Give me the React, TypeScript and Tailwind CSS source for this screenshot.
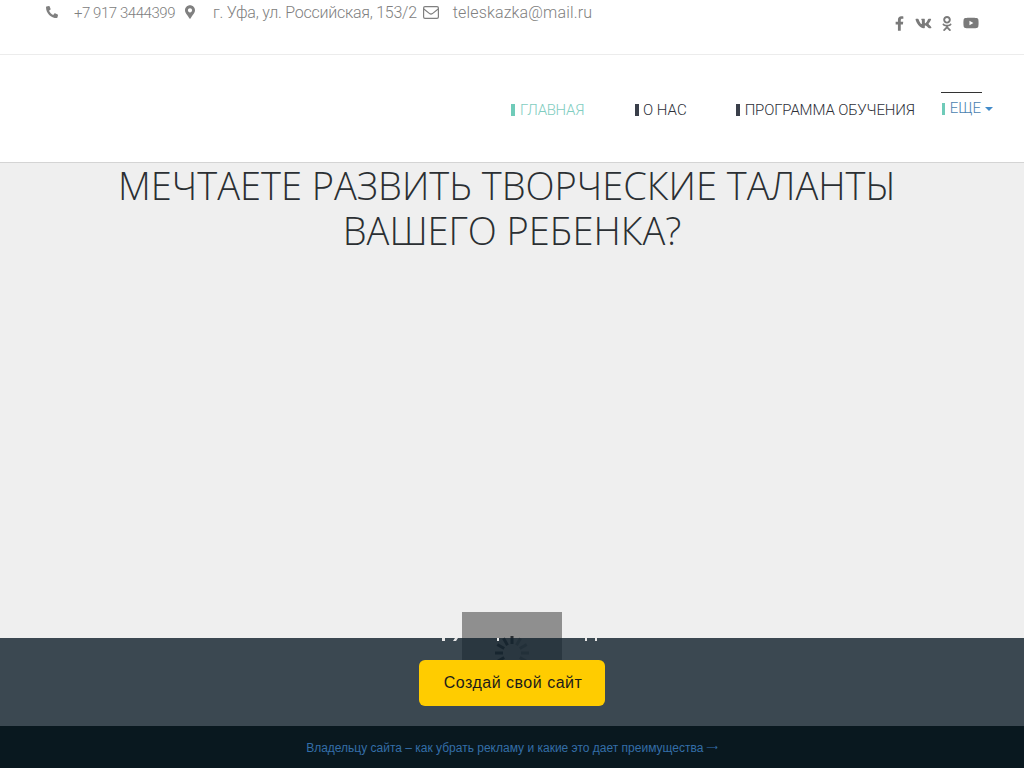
import { FaFacebookF, FaVk, FaOdnoklassniki, FaYoutube, FaPhone, FaMapMarkerAlt } from "react-icons/fa";

function NavItem({ label, active, narrow }: { label: string; active?: boolean; narrow?: boolean }) {
  return (
    <a className={`flex items-center text-[15px] font-light ${narrow ? "gap-[4px]" : "gap-[5px]"} ${active ? "text-[#7fcdbf]" : "text-[#2d3038]"}`}>
      <span className={`w-[4px] h-[12px] ${active ? "bg-[#6fcbb9]" : "bg-[#3a3f4a]"}`} />
      {label}
    </a>
  );
}

export default function App() {
  return (
    <div className="relative h-[768px] overflow-hidden bg-white font-['Roboto',sans-serif]">
      <div className="h-[55px] border-b border-[#ececec] flex justify-between pl-[46px] pr-[45px] pt-[1px] text-[#808080] font-light text-[16px]">
        <div className="flex items-start h-[20px]">
          <FaPhone className="w-[12px] h-[12px] mt-[5px] scale-x-[-1]" />
          <span className="ml-[16px] text-[15px] tracking-[-0.45px] mt-[1px]">+7 917 3444399</span>
          <FaMapMarkerAlt className="w-[10px] h-[14px] ml-[10px] mt-[4px]" />
          <span className="ml-[18px] tracking-[-0.25px]">г. Уфа, ул. Российская, 153/2</span>
          <svg width="16" height="13" viewBox="0 0 16 13" fill="none" stroke="#808080" strokeWidth="1.2" className="ml-[6px] mt-[5px]">
            <rect x="0.6" y="0.6" width="14.8" height="11.8" rx="1.4" />
            <path d="M0.8 3 L6.6 7.6 Q8 8.6 9.4 7.6 L15.2 3" />
          </svg>
          <span className="ml-[14px] tracking-[0.15px]">teleskazka@mail.ru</span>
        </div>
        <div className="flex items-center h-[16px] mt-[14px] text-[#7a7a7a]">
          <FaFacebookF className="w-[9px] h-[15px]" />
          <FaVk className="w-[17px] h-[17px] ml-[11px]" />
          <FaOdnoklassniki className="w-[10px] h-[15px] ml-[10px]" />
          <FaYoutube className="w-[16px] h-[16px] ml-[11px]" />
        </div>
      </div>

      <div className="h-[108px] border-b border-[#d4d4d4] flex items-center justify-end pr-[31px] pt-[3px]">
        <div className="tracking-[-0.3px]"><NavItem label="ГЛАВНАЯ" active /></div>
        <div className="ml-[51px]"><NavItem label="О НАС" narrow /></div>
        <div className="ml-[49px] tracking-[-0.15px]"><NavItem label="ПРОГРАММА ОБУЧЕНИЯ" /></div>
        <div className="ml-[27px] relative -mt-[3px]">
          <span className="absolute top-[-5px] left-[-1px] w-[41px] h-px bg-[#333]" />
          <a className="flex items-center gap-[5px] text-[15px] font-light text-[#4a7fb0]">
            <span className="w-[3px] h-[12px] bg-[#6fcbb9]" />
            ЕЩЕ
            <span className="w-0 h-0 ml-[-1px] border-l-[4px] border-r-[4px] border-t-[4px] border-l-transparent border-r-transparent border-t-[#428bca]" />
          </a>
        </div>
      </div>

      <div className="h-[606px] bg-[#efefef] flex flex-col items-center text-center">
        <h1 className="font-['Open_Sans',sans-serif] font-light text-[38px] text-[#2b2f33]">
          <span className="block leading-[45px] pr-[10px]">МЕЧТАЕТЕ РАЗВИТЬ ТВОРЧЕСКИЕ ТАЛАНТЫ</span>
          <span className="block leading-[45px]">ВАШЕГО РЕБЕНКА?</span>
        </h1>
      </div>

      <div className="absolute left-[462px] top-[612px] w-[100px] h-[48px] overflow-hidden bg-black/40">
        <svg width="36" height="36" viewBox="0 0 36 36" className="absolute left-[32px] top-[23px]">
          {Array.from({ length: 12 }).map((_, i) => (
            <rect key={i} x="16.5" y="1" width="3" height="8" fill="#2a2e32" opacity={i >= 1 && i <= 4 ? 0.4 : 1} transform={`rotate(${i * 30} 18 18)`} />
          ))}
        </svg>
      </div>

      <div className="absolute left-0 right-0 bottom-0">
        <div className="relative h-[88px] bg-[#14232e]/[.82] flex items-end justify-center pb-[20px]">
          <svg width="170" height="4" viewBox="0 0 170 4" className="absolute left-[430px] top-0" fill="#e8e8e8">
            <rect x="12" y="0" width="3" height="3" />
            <path d="M25 0h3l-2 3h-3z" />
            <rect x="67" y="0" width="2" height="3" />
            <rect x="155" y="0" width="2" height="3" />
            <rect x="165" y="0" width="2" height="3" />
          </svg>
          <button className="w-[186px] h-[46px] pl-[2px] rounded-[6px] bg-[#ffcc00] text-[#1b1b1b] font-['Liberation_Sans',sans-serif] text-[16px] tracking-[0.5px]">
            Создай свой сайт
          </button>
        </div>
        <div className="h-[42px] bg-[#09181f] flex items-center justify-center gap-[3px] pt-[1px] font-['Liberation_Sans',sans-serif] text-[12px] text-[#346ea8]">
          <span>Владельцу сайта – как убрать рекламу и какие это дает преимущества</span>
          <span className="text-[8px] font-['DejaVu_Sans',sans-serif]">⟶</span>
        </div>
      </div>
    </div>
  );
}
